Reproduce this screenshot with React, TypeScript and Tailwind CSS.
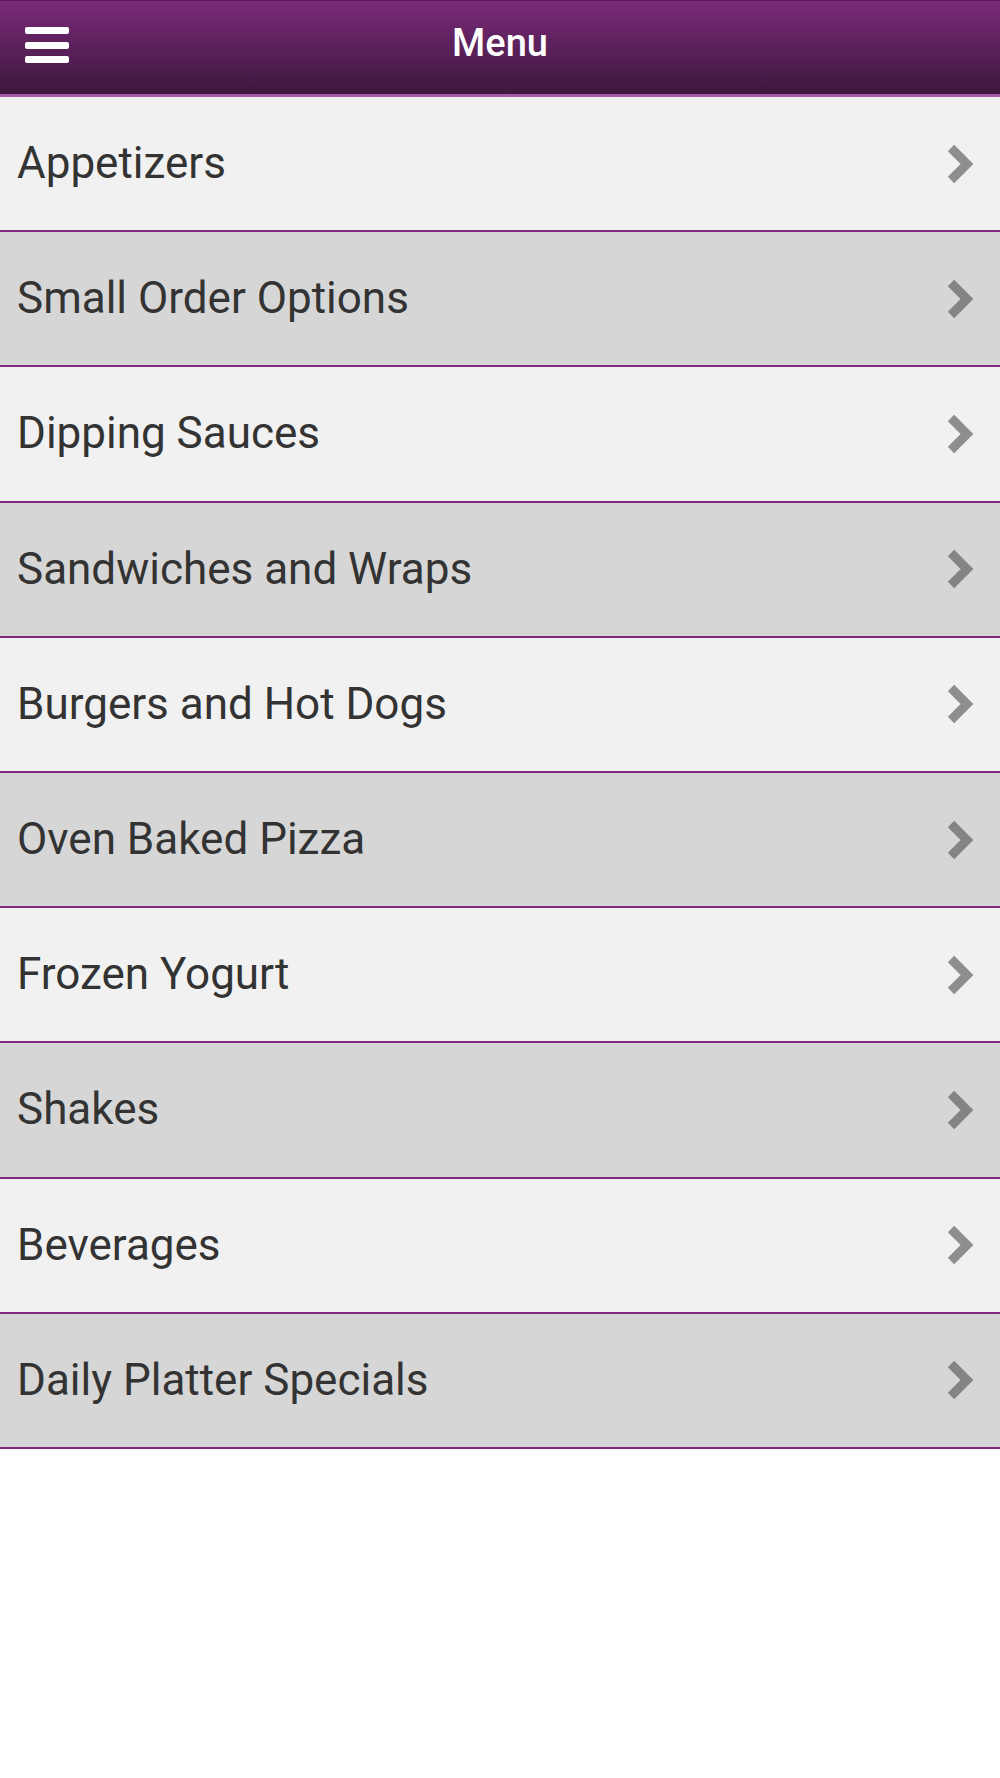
import React from "react";

const items = [
  "Appetizers",
  "Small Order Options",
  "Dipping Sauces",
  "Sandwiches and Wraps",
  "Burgers and Hot Dogs",
  "Oven Baked Pizza",
  "Frozen Yogurt",
  "Shakes",
  "Beverages",
  "Daily Platter Specials",
];

function Chevron({ dark }: { dark: boolean }) {
  return (
    <svg width="27" height="40" viewBox="0 0 27 40" className="shrink-0">
      <polyline
        points="4,4 20,20 4,36"
        fill="none"
        stroke={dark ? "#848484" : "#8e8e8e"}
        strokeWidth="9"
        strokeLinejoin="miter"
        strokeLinecap="butt"
      />
    </svg>
  );
}

export default function App() {
  return (
    <div className="w-[1000px] min-h-[1778px] bg-white font-['Roboto',sans-serif]">
      <header className="relative h-[97px] border-t border-[#5c1f5a] border-b-[3px] border-b-[#a85ca8] bg-gradient-to-b from-[#7b2a79] to-[#3d183d] flex items-center justify-center">
        <div className="absolute left-[25px] top-[26px] flex flex-col gap-[7.5px]">
          <span className="block w-[44px] h-[7px] rounded-[2px] bg-white" />
          <span className="block w-[44px] h-[7px] rounded-[2px] bg-white" />
          <span className="block w-[44px] h-[7px] rounded-[2px] bg-white" />
        </div>
        <h1 className="text-white text-[38px] font-medium leading-none -mt-[10px]">Menu</h1>
      </header>
      <ul>
        {items.map((label, i) => {
          const dark = i % 2 === 1;
          return (
            <li
              key={label}
              className={`h-[135.2px] border-b-2 border-[#7d2a7e] flex items-center justify-between pl-[17px] pr-[26px] ${
                dark ? "bg-[#d6d6d6]" : "bg-[#f1f1f1]"
              }`}
            >
              <span className="text-[44px] leading-none text-[#333333] mt-[-1px]">{label}</span>
              <Chevron dark={dark} />
            </li>
          );
        })}
      </ul>
    </div>
  );
}
